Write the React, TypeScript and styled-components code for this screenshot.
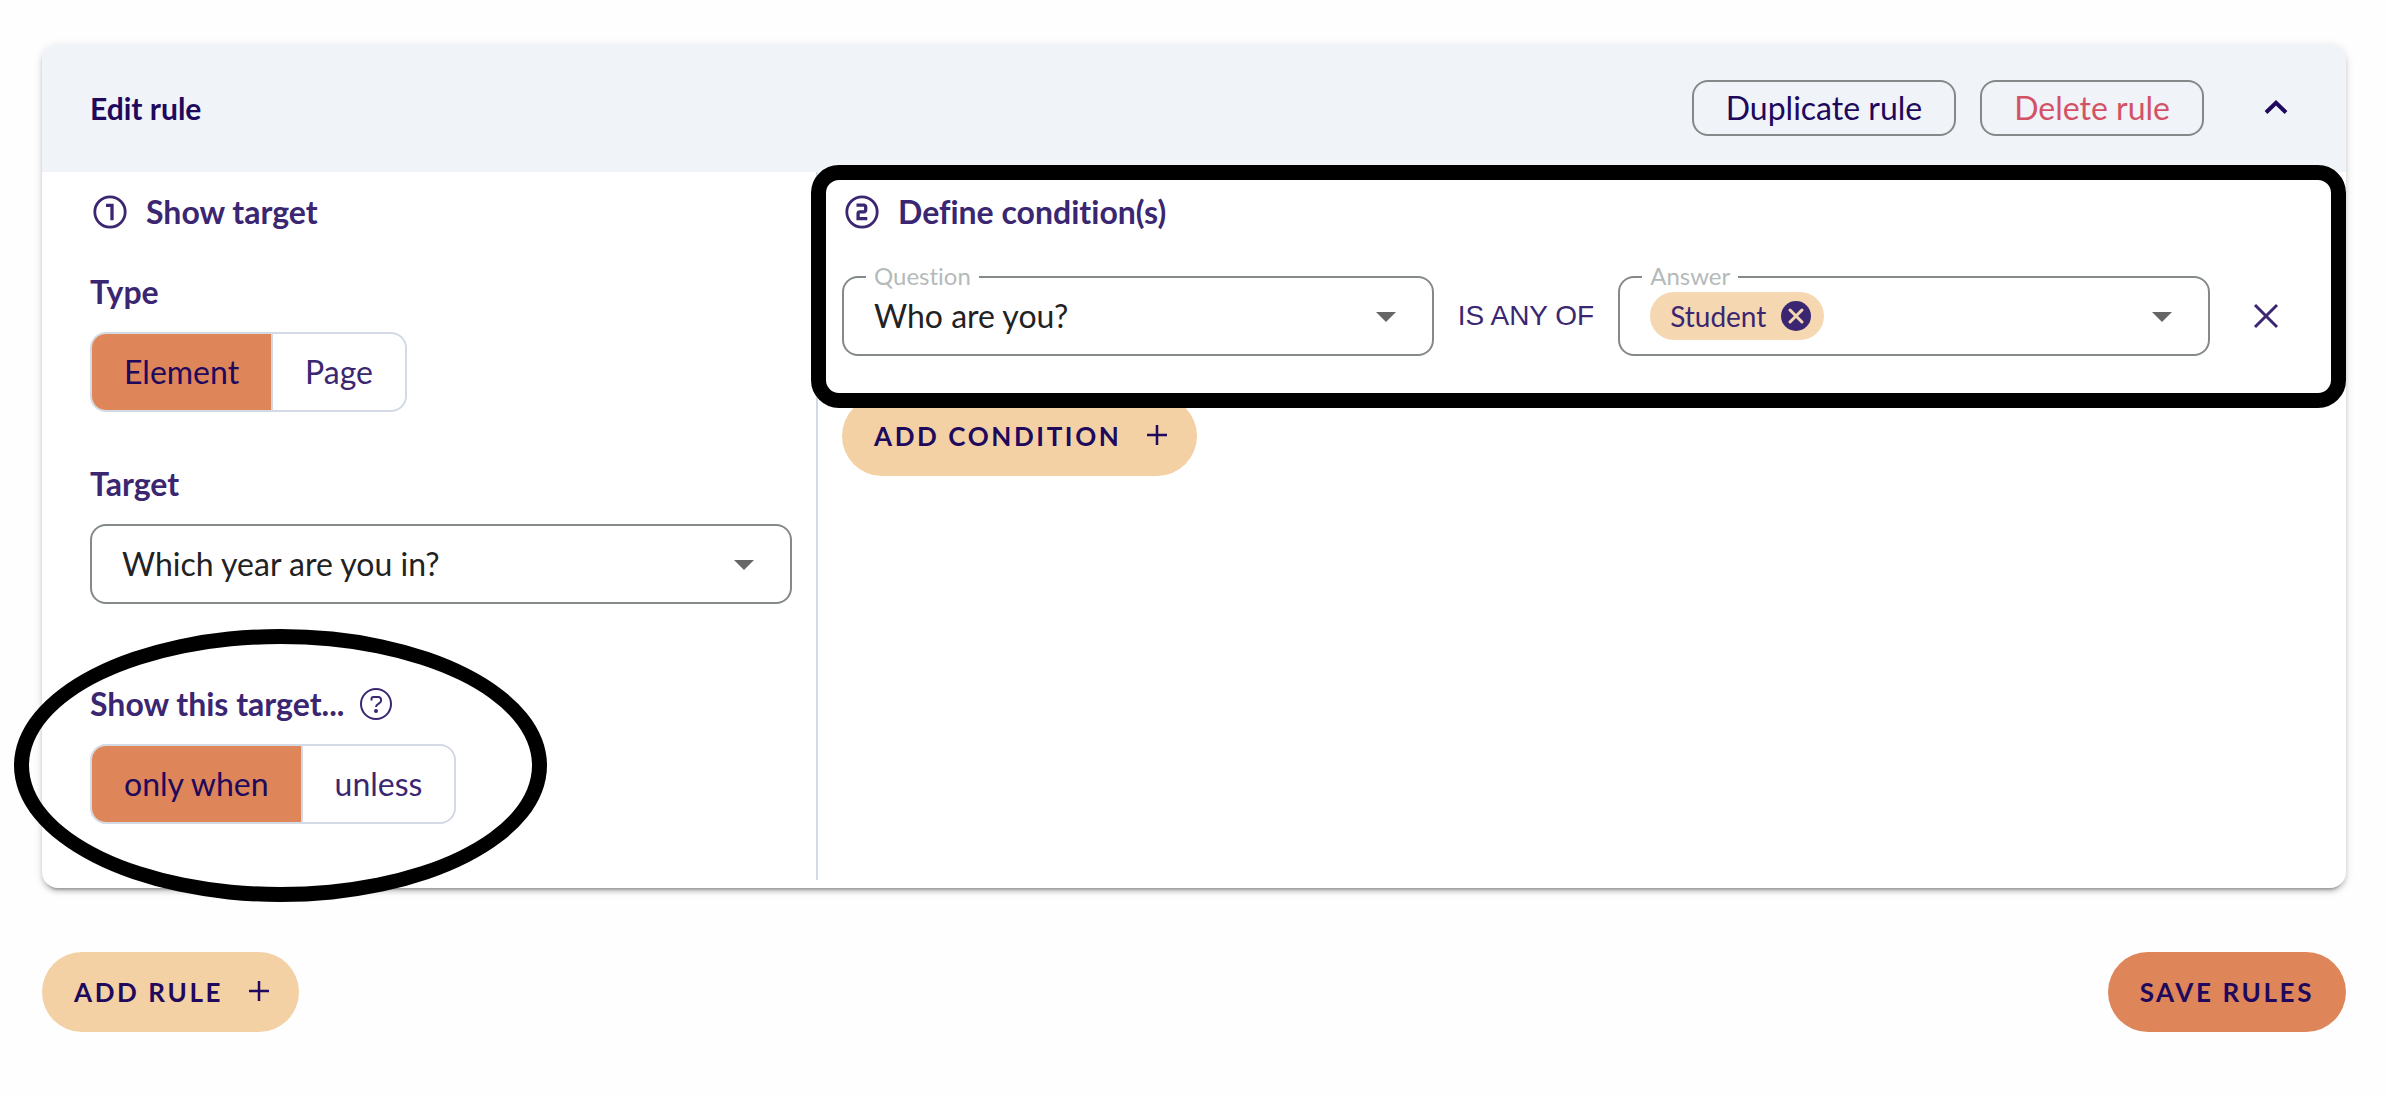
import React, { useState } from "react";
import styled, { createGlobalStyle, css } from "styled-components";

const ink = "#20085c";
const violet = "#3b2671";
const orange = "#de8559";
const sand = "#f3d1a5";
const outline = "#848a89";
const hairline = "#d3dae3";

const GlobalStyle = createGlobalStyle`
  *, *::before, *::after { box-sizing: border-box; }
  body { margin: 0; background: #fefefe; }
  button, input, select { font: inherit; color: inherit; }
`;

const Page = styled.main`
  font-family: Lato, "Liberation Sans", sans-serif;
  font-size: 32px;
  line-height: 40px;
  font-variant-ligatures: none;
  color: ${violet};
  padding: 44px 40px 64px 42px;
`;

const Card = styled.section`
  position: relative;
  border-radius: 16px;
  background: #fff;
  box-shadow: 0 6px 2px -4px rgba(0, 0, 0, 0.2), 0 4px 4px rgba(0, 0, 0, 0.14),
    0 2px 10px rgba(0, 0, 0, 0.12);
`;

const CardHeader = styled.header`
  display: flex;
  align-items: center;
  height: 128px;
  padding: 0 46px 0 48px;
  border-radius: 16px 16px 0 0;
  background: #f0f3f8;
  color: ${ink};
`;

const CardTitle = styled.h2`
  flex: 1;
  margin: 0;
  font-size: 30px;
  font-weight: 700;
`;

const HeaderActions = styled.div`
  display: flex;
  align-items: center;
  gap: 24px;
`;

const OutlineButton = styled.button<{ $danger?: boolean }>`
  height: 56px;
  padding: 0 32px;
  border: 2px solid ${outline};
  border-radius: 16px;
  background: transparent;
  color: ${(p) => (p.$danger ? "#d35266" : ink)};
  cursor: pointer;
`;

const IconButton = styled.button`
  display: grid;
  place-items: center;
  width: 48px;
  height: 48px;
  padding: 0;
  border: 0;
  background: none;
  color: inherit;
  cursor: pointer;
`;

const CollapseButton = styled(IconButton)`
  margin-left: 24px;
`;

const CardBody = styled.div`
  display: grid;
  grid-template-columns: 776px minmax(0, 1fr);
  padding-bottom: 8px;
`;

const TargetColumn = styled.div`
  padding: 20px 24px 56px 48px;
  border-right: 2px solid ${hairline};
`;

const ConditionColumn = styled.div`
  padding: 20px 56px 0 24px;
`;

const StepHeading = styled.h3`
  display: flex;
  align-items: center;
  gap: 16px;
  margin: 0;
  font-size: 32px;
  font-weight: 700;
`;

const Group = styled.fieldset<{ $gap: number }>`
  margin: ${(p) => p.$gap}px 0 0;
  padding: 0;
  border: 0;
`;

const labelStyle = css`
  display: flex;
  align-items: center;
  gap: 16px;
  padding: 0;
  margin-bottom: 20px;
  font-weight: 700;
`;

const Legend = styled.legend`
  ${labelStyle}
`;

const FieldLabel = styled.label`
  ${labelStyle}
`;

const Toggle = styled.div`
  display: inline-flex;
  vertical-align: top;
  height: 80px;
  border: 2px solid ${hairline};
  border-radius: 16px;
  overflow: hidden;
`;

const ToggleOption = styled.label`
  display: flex;
  align-items: center;
  padding: 0 32px;
  cursor: pointer;

  & + & {
    border-left: 2px solid ${hairline};
  }

  &:has(input:checked) {
    background: ${orange};
    color: ${ink};
  }
`;

const HiddenRadio = styled.input`
  appearance: none;
  width: 0;
  height: 0;
  margin: 0;
`;

const SelectBox = styled.div`
  position: relative;
  display: flex;
  align-items: center;
  height: 80px;
  min-width: 0;
`;

const Select = styled.select`
  appearance: none;
  width: 100%;
  height: 80px;
  padding: 0 80px 0 30px;
  border: 2px solid ${outline};
  border-radius: 16px;
  background: transparent;
  color: #222;
`;

const Arrow = styled.svg`
  position: absolute;
  right: 38px;
  top: 36px;
  pointer-events: none;
`;

const FloatingLabel = styled.label`
  position: absolute;
  left: 24px;
  top: -16px;
  padding: 0 8px;
  background: #fff;
  font-size: 24px;
  line-height: 32px;
  color: #b5bab9;
`;

const AnswerBox = styled(SelectBox)`
  padding: 0 30px;
  border: 2px solid ${outline};
  border-radius: 16px;

  ${FloatingLabel} {
    left: 22px;
    top: -18px;
  }
  ${Arrow} {
    right: 36px;
    top: 34px;
  }
`;

const AnswerInput = styled.input`
  flex: 1;
  min-width: 0;
  border: 0;
  outline: 0;
  background: transparent;
`;

const Chip = styled.span`
  display: inline-flex;
  align-items: center;
  gap: 14px;
  height: 48px;
  padding: 0 12px 0 20px;
  border-radius: 24px;
  background: #f5d7b1;
  font-size: 28px;
`;

const ChipRemove = styled(IconButton)`
  width: 32px;
  height: 32px;
`;

const ConditionRow = styled.div`
  display: grid;
  grid-template-columns: minmax(0, 1fr) auto minmax(0, 1fr) auto;
  align-items: center;
  gap: 24px;
  margin-top: 44px;
`;

const Operator = styled.span`
  font-family: "Liberation Sans", Arial, sans-serif;
  font-size: 28px;
  white-space: nowrap;
`;

const RemoveCondition = styled(IconButton)`
  margin-left: 8px;
`;

const PillButton = styled.button<{ $primary?: boolean }>`
  display: inline-flex;
  align-items: center;
  gap: 24px;
  height: 80px;
  padding: 0 32px;
  border: 0;
  border-radius: 40px;
  background: ${(p) => (p.$primary ? orange : sand)};
  color: ${ink};
  font-size: 26px;
  font-weight: 700;
  letter-spacing: 0.1em;
  text-transform: uppercase;
  cursor: pointer;

  svg {
    margin-right: -4px;
  }
`;

const AddConditionRow = styled.div`
  margin-top: 40px;
`;

const PageActions = styled.footer`
  display: flex;
  justify-content: space-between;
  margin-top: 64px;
`;

/* Marker strokes drawn over the card to call out two areas. */
const BoxMarker = styled.div`
  position: absolute;
  z-index: 1;
  top: 121px;
  left: 769px;
  right: 0;
  height: 243px;
  border: 15px solid #000;
  border-radius: 28px;
  pointer-events: none;
`;

const OvalMarker = styled.div`
  position: absolute;
  z-index: 1;
  top: 585px;
  left: -28px;
  width: 533px;
  height: 273px;
  border: 15px solid #000;
  border-radius: 50%;
  pointer-events: none;
`;

const StepIcon = ({ step }: { step: 1 | 2 }) => (
  <svg width="40" height="40" viewBox="0 0 40 40" fill="none" stroke="currentColor" strokeWidth="3.3" aria-hidden="true">
    <circle cx="20" cy="20" r="15.2" strokeWidth="2.8" />
    {step === 1 ? (
      <path d="M16 13.3h6V28.300" />
    ) : (
      <path d="M14.500 13.200h7.400a1.800 1.800 0 0 1 1.800 1.800v3a1.800 1.800 0 0 1-1.800 1.800h-4a1.800 1.800 0 0 0-1.800 1.800v5h9.200" />
    )}
  </svg>
);

const HelpIcon = () => (
  <svg width="32" height="32" viewBox="0 0 32 32" fill="none" stroke="currentColor" strokeWidth="2" aria-hidden="true">
    <circle cx="16" cy="16" r="15" />
    <path d="M11.5 12.5V11a2 2 0 0 1 2-2h5a2.500 2.500 0 0 1 2.500 2.500v1.500c0 2.800-5 2.700-5 6" />
    <circle cx="16" cy="23" r="1" />
  </svg>
);

const PlusIcon = () => (
  <svg width="24" height="24" viewBox="0 0 24 24" stroke="currentColor" strokeWidth="2.500" aria-hidden="true">
    <path d="M2 11h20M12 1v20" />
  </svg>
);

const ArrowIcon = () => (
  <Arrow width="20" height="10" viewBox="0 0 20 10" aria-hidden="true">
    <path d="M0 0h20L10 10z" fill="#666" />
  </Arrow>
);

interface ToggleFieldProps {
  name: string;
  options: string[];
}

const ToggleField = ({ name, options }: ToggleFieldProps) => {
  const [value, setValue] = useState(options[0]);
  return (
    <Toggle>
      {options.map((option) => (
        <ToggleOption key={option}>
          <HiddenRadio type="radio" name={name} checked={value === option} onChange={() => setValue(option)} />
          {option}
        </ToggleOption>
      ))}
    </Toggle>
  );
};

export default function App() {
  return (
    <Page>
      <GlobalStyle />
      <Card>
        <CardHeader>
          <CardTitle>Edit rule</CardTitle>
          <HeaderActions>
            <OutlineButton type="button">Duplicate rule</OutlineButton>
            <OutlineButton type="button" $danger>Delete rule</OutlineButton>
            <CollapseButton type="button" aria-label="Collapse rule">
              <svg width="24" height="16" viewBox="0 0 24 16" fill="none" stroke="currentColor" strokeWidth="4">
                <path d="M2 12.500 12 2.800l10 9.700" />
              </svg>
            </CollapseButton>
          </HeaderActions>
        </CardHeader>
        <CardBody>
          <TargetColumn>
            <StepHeading><StepIcon step={1} />Show target</StepHeading>
            <Group $gap={40}>
              <Legend>Type</Legend>
              <ToggleField name="type" options={["Element", "Page"]} />
            </Group>
            <Group $gap={52} as="div">
              <FieldLabel htmlFor="target">Target</FieldLabel>
              <SelectBox>
                <Select id="target"><option>Which year are you in?</option></Select>
                <ArrowIcon />
              </SelectBox>
            </Group>
            <Group $gap={80}>
              <Legend>Show this target... <HelpIcon /></Legend>
              <ToggleField name="mode" options={["only when", "unless"]} />
            </Group>
          </TargetColumn>
          <ConditionColumn>
            <StepHeading><StepIcon step={2} />Define condition(s)</StepHeading>
            <ConditionRow>
              <SelectBox>
                <Select id="question"><option>Who are you?</option></Select>
                <FloatingLabel htmlFor="question">Question</FloatingLabel>
                <ArrowIcon />
              </SelectBox>
              <Operator>IS ANY OF</Operator>
              <AnswerBox>
                <FloatingLabel htmlFor="answer">Answer</FloatingLabel>
                <Chip>
                  Student
                  <ChipRemove type="button" aria-label="Remove Student">
                    <svg width="32" height="32" viewBox="0 0 32 32">
                      <circle cx="16" cy="16" r="15" fill="currentColor" />
                      <path d="m10 10 12 12M22 10 10 22" stroke="#f5d7b1" strokeWidth="3" strokeLinecap="round" />
                    </svg>
                  </ChipRemove>
                </Chip>
                <AnswerInput id="answer" type="text" />
                <ArrowIcon />
              </AnswerBox>
              <RemoveCondition type="button" aria-label="Remove condition">
                <svg width="26" height="26" viewBox="0 0 26 26" stroke="currentColor" strokeWidth="3">
                  <path d="m2 2 22 22M24 2 2 24" />
                </svg>
              </RemoveCondition>
            </ConditionRow>
            <AddConditionRow>
              <PillButton type="button">Add condition<PlusIcon /></PillButton>
            </AddConditionRow>
          </ConditionColumn>
        </CardBody>
        <BoxMarker />
        <OvalMarker />
      </Card>
      <PageActions>
        <PillButton type="button">Add rule<PlusIcon /></PillButton>
        <PillButton type="button" $primary>Save rules</PillButton>
      </PageActions>
    </Page>
  );
}
